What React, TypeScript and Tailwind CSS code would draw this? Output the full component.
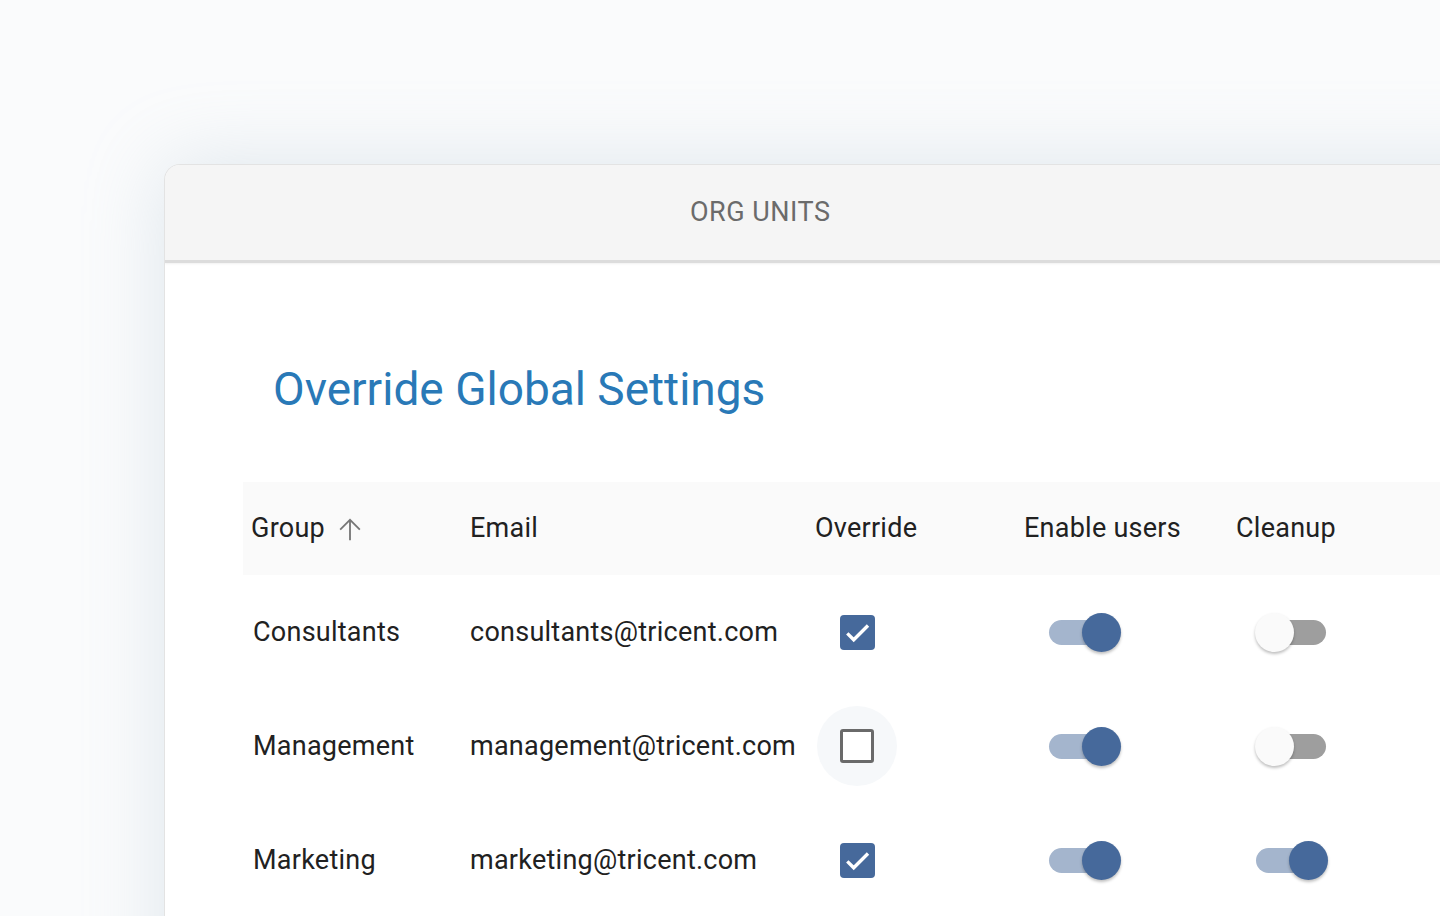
import { useState } from "react";

type Row = {
  group: string;
  email: string;
  override: boolean;
  enableUsers: boolean;
  cleanup: boolean;
};

const rows: Row[] = [
  { group: "Consultants", email: "consultants@tricent.com", override: true, enableUsers: true, cleanup: false },
  { group: "Management", email: "management@tricent.com", override: false, enableUsers: true, cleanup: false },
  { group: "Marketing", email: "marketing@tricent.com", override: true, enableUsers: true, cleanup: true },
];

const cols = "grid grid-cols-[219px_345px_209px_212px_1fr]";

function ArrowUp() {
  return (
    <svg viewBox="0 0 24 24" className="h-[34px] w-[34px] fill-[#777777]">
      <path d="M4.6 12l0.9 0.9L11.35 7.1V20h1.3V7.1l5.85 5.8L19.4 12 12 4.6z" />
    </svg>
  );
}

function Checkbox({ checked, hover }: { checked: boolean; hover?: boolean }) {
  return (
    <div
      className={
        "ml-[10px] flex h-[80px] w-[80px] items-center justify-center rounded-full " +
        (hover ? "bg-[#f6f8fa]" : "")
      }
    >
      {checked ? (
        <div className="flex h-[35px] w-[35px] items-center justify-center rounded-[4px] bg-[#46699b]">
          <svg viewBox="0 0 24 24" className="h-[35px] w-[35px]">
            <path d="M5 12.6l4.4 4.4L19.2 7.2" fill="none" stroke="white" strokeWidth="2.3" />
          </svg>
        </div>
      ) : (
        <div className="h-[34px] w-[34px] rounded-[3px] border-[3px] border-[#6a6a6a] bg-white" />
      )}
    </div>
  );
}

function Switch({ on }: { on: boolean }) {
  return (
    <div className="relative h-[39px] w-[70px]">
      <div
        className={
          "absolute left-0 right-0 top-[7px] h-[25px] rounded-full " +
          (on ? "bg-[#a4b5cd]" : "bg-[#9e9e9e]")
        }
      />
      <div
        className={
          "absolute top-0 h-[39px] w-[39px] rounded-full shadow-[0_2px_3px_rgba(0,0,0,0.25)] " +
          (on ? "left-[33px] bg-[#46699b]" : "left-[-1px] bg-[#fafafa]")
        }
      />
    </div>
  );
}

export default function App() {
  const [data] = useState(rows);

  return (
    <div
      className="h-[916px] w-full overflow-hidden bg-[#fafbfc] pl-[164px] pt-[164px] text-[#212121]"
      style={{ fontFamily: "Roboto, 'Noto Sans', sans-serif" }}
    >
      <div className="h-[900px] w-[1400px] overflow-hidden rounded-tl-[16px] border-l border-t border-[#e3e3e3] bg-white shadow-[0_0_80px_rgba(170,190,205,0.33)]">
        <div className="flex h-[98px] items-center border-b-[3px] border-[#dcdcdc] bg-[#f5f5f5] pl-[525px] shadow-[0_1px_2px_rgba(0,0,0,0.06)]">
          <span className="text-[27px] tracking-[0.5px] text-[#6b6b6b]">ORG UNITS</span>
        </div>

        <div className="pl-[78px] pt-[99px]">
          <h1 className="ml-[30px] text-[46px] font-normal leading-[54px] text-[#2979b7]">
            Override Global Settings
          </h1>

          <div className="mt-[66px] text-[27px] tracking-[0.25px]">
            <div className={cols + " h-[93px] items-center bg-[#fafafa]"}>
              <div className="flex items-center gap-[8px] pl-[8px]">
                <span>Group</span>
                <ArrowUp />
              </div>
              <div className="pl-[8px]">Email</div>
              <div className="pl-[8px]">Override</div>
              <div className="pl-[8px]">Enable users</div>
              <div className="pl-[8px]">Cleanup</div>
            </div>

            {data.map((row, i) => (
              <div key={row.group} className={cols + " h-[114px] items-center"}>
                <div className="pl-[10px]">{row.group}</div>
                <div className="pl-[8px]">{row.email}</div>
                <div>
                  <Checkbox checked={row.override} hover={i === 1} />
                </div>
                <div className="pl-[33px]">
                  <Switch on={row.enableUsers} />
                </div>
                <div className="pl-[28px]">
                  <Switch on={row.cleanup} />
                </div>
              </div>
            ))}
          </div>
        </div>
      </div>
    </div>
  );
}
